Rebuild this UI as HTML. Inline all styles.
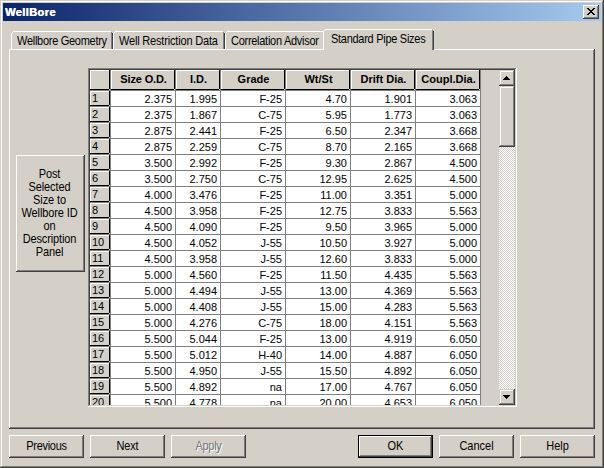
<!DOCTYPE html>
<html><head><meta charset="utf-8"><style>
html,body{margin:0;padding:0;}
body{width:604px;height:468px;overflow:hidden;position:relative;background:#d4d0c8;font-family:"Liberation Sans",sans-serif;font-size:11px;color:#000;}
div,span,svg{position:absolute;}
span{white-space:nowrap;}
</style></head><body>
<div style="left:0px;top:0px;width:604px;height:468px;background:#d4d0c8;"></div>
<div style="left:0px;top:0px;width:604px;height:1px;background:#d4d0c8;"></div>
<div style="left:0px;top:0px;width:1px;height:468px;background:#d4d0c8;"></div>
<div style="left:0px;top:467px;width:604px;height:1px;background:#404040;"></div>
<div style="left:603px;top:0px;width:1px;height:468px;background:#404040;"></div>
<div style="left:1px;top:1px;width:602px;height:1px;background:#ffffff;"></div>
<div style="left:1px;top:1px;width:1px;height:466px;background:#ffffff;"></div>
<div style="left:1px;top:466px;width:602px;height:1px;background:#808080;"></div>
<div style="left:602px;top:1px;width:1px;height:466px;background:#808080;"></div>
<div style="left:3px;top:3px;width:598px;height:18px;background:linear-gradient(to right,#0a246a,#a6caf0);"></div>
<span style="left:5px;top:4px;font-weight:bold;color:#fff;font-size:11px;line-height:16px;letter-spacing:0.4px;text-shadow:0.5px 0 0 #fff">WellBore</span>
<div style="left:583px;top:5px;width:16px;height:14px;background:#d4d0c8;"></div>
<div style="left:583px;top:5px;width:16px;height:1px;background:#ffffff;"></div>
<div style="left:583px;top:5px;width:1px;height:14px;background:#ffffff;"></div>
<div style="left:583px;top:18px;width:16px;height:1px;background:#404040;"></div>
<div style="left:598px;top:5px;width:1px;height:14px;background:#404040;"></div>
<div style="left:584px;top:6px;width:14px;height:1px;background:#d4d0c8;"></div>
<div style="left:584px;top:6px;width:1px;height:12px;background:#d4d0c8;"></div>
<div style="left:584px;top:17px;width:14px;height:1px;background:#808080;"></div>
<div style="left:597px;top:6px;width:1px;height:12px;background:#808080;"></div>
<div style="left:587px;top:8px;width:1px;height:1px;background:#000;"></div>
<div style="left:588px;top:8px;width:1px;height:1px;background:#000;"></div>
<div style="left:593px;top:8px;width:1px;height:1px;background:#000;"></div>
<div style="left:594px;top:8px;width:1px;height:1px;background:#000;"></div>
<div style="left:588px;top:9px;width:1px;height:1px;background:#000;"></div>
<div style="left:589px;top:9px;width:1px;height:1px;background:#000;"></div>
<div style="left:592px;top:9px;width:1px;height:1px;background:#000;"></div>
<div style="left:593px;top:9px;width:1px;height:1px;background:#000;"></div>
<div style="left:589px;top:10px;width:1px;height:1px;background:#000;"></div>
<div style="left:590px;top:10px;width:1px;height:1px;background:#000;"></div>
<div style="left:591px;top:10px;width:1px;height:1px;background:#000;"></div>
<div style="left:592px;top:10px;width:1px;height:1px;background:#000;"></div>
<div style="left:590px;top:11px;width:1px;height:1px;background:#000;"></div>
<div style="left:591px;top:11px;width:1px;height:1px;background:#000;"></div>
<div style="left:589px;top:12px;width:1px;height:1px;background:#000;"></div>
<div style="left:590px;top:12px;width:1px;height:1px;background:#000;"></div>
<div style="left:591px;top:12px;width:1px;height:1px;background:#000;"></div>
<div style="left:592px;top:12px;width:1px;height:1px;background:#000;"></div>
<div style="left:588px;top:13px;width:1px;height:1px;background:#000;"></div>
<div style="left:589px;top:13px;width:1px;height:1px;background:#000;"></div>
<div style="left:592px;top:13px;width:1px;height:1px;background:#000;"></div>
<div style="left:593px;top:13px;width:1px;height:1px;background:#000;"></div>
<div style="left:587px;top:14px;width:1px;height:1px;background:#000;"></div>
<div style="left:588px;top:14px;width:1px;height:1px;background:#000;"></div>
<div style="left:593px;top:14px;width:1px;height:1px;background:#000;"></div>
<div style="left:594px;top:14px;width:1px;height:1px;background:#000;"></div>
<div style="left:9px;top:49px;width:586px;height:1px;background:#ffffff;"></div>
<div style="left:9px;top:49px;width:1px;height:380px;background:#ffffff;"></div>
<div style="left:10px;top:427px;width:584px;height:1px;background:#808080;"></div>
<div style="left:593px;top:50px;width:1px;height:378px;background:#808080;"></div>
<div style="left:9px;top:428px;width:586px;height:1px;background:#404040;"></div>
<div style="left:594px;top:49px;width:1px;height:380px;background:#404040;"></div>
<div style="left:13px;top:31px;width:98px;height:1px;background:#ffffff;"></div>
<div style="left:12px;top:32px;width:1px;height:1px;background:#ffffff;"></div>
<div style="left:11px;top:33px;width:1px;height:16px;background:#ffffff;"></div>
<div style="left:111px;top:32px;width:1px;height:17px;background:#808080;"></div>
<div style="left:112px;top:33px;width:1px;height:16px;background:#404040;"></div>
<span style="left:17px;top:34px;font-size:11px;line-height:13px;letter-spacing:-0.28px;transform:scaleY(1.125);transform-origin:0 0;">Wellbore Geometry</span>
<div style="left:115px;top:31px;width:108px;height:1px;background:#ffffff;"></div>
<div style="left:114px;top:32px;width:1px;height:1px;background:#ffffff;"></div>
<div style="left:113px;top:33px;width:1px;height:16px;background:#ffffff;"></div>
<div style="left:223px;top:32px;width:1px;height:17px;background:#808080;"></div>
<div style="left:224px;top:33px;width:1px;height:16px;background:#404040;"></div>
<span style="left:119px;top:34px;font-size:11px;line-height:13px;letter-spacing:-0.18px;transform:scaleY(1.125);transform-origin:0 0;">Well Restriction Data</span>
<div style="left:227px;top:31px;width:97px;height:1px;background:#ffffff;"></div>
<div style="left:226px;top:32px;width:1px;height:1px;background:#ffffff;"></div>
<div style="left:225px;top:33px;width:1px;height:16px;background:#ffffff;"></div>
<div style="left:324px;top:32px;width:1px;height:17px;background:#808080;"></div>
<div style="left:325px;top:33px;width:1px;height:16px;background:#404040;"></div>
<span style="left:231px;top:34px;font-size:11px;line-height:13px;letter-spacing:-0.28px;transform:scaleY(1.125);transform-origin:0 0;">Correlation Advisor</span>
<div style="left:323px;top:29px;width:111px;height:22px;background:#d4d0c8;"></div>
<div style="left:325px;top:29px;width:107px;height:1px;background:#ffffff;"></div>
<div style="left:324px;top:30px;width:1px;height:1px;background:#ffffff;"></div>
<div style="left:323px;top:31px;width:1px;height:19px;background:#ffffff;"></div>
<div style="left:432px;top:30px;width:1px;height:20px;background:#808080;"></div>
<div style="left:433px;top:31px;width:1px;height:19px;background:#404040;"></div>
<span style="left:331px;top:32px;font-size:11px;line-height:13px;letter-spacing:-0.28px;transform:scaleY(1.125);transform-origin:0 0;">Standard Pipe Sizes</span>
<div style="left:16px;top:155px;width:69px;height:117px;background:#d4d0c8;"></div>
<div style="left:16px;top:155px;width:69px;height:1px;background:#ffffff;"></div>
<div style="left:16px;top:155px;width:1px;height:117px;background:#ffffff;"></div>
<div style="left:16px;top:271px;width:69px;height:1px;background:#404040;"></div>
<div style="left:84px;top:155px;width:1px;height:117px;background:#404040;"></div>
<div style="left:17px;top:156px;width:67px;height:1px;background:#d4d0c8;"></div>
<div style="left:17px;top:156px;width:1px;height:115px;background:#d4d0c8;"></div>
<div style="left:17px;top:270px;width:67px;height:1px;background:#808080;"></div>
<div style="left:83px;top:156px;width:1px;height:115px;background:#808080;"></div>
<span style="left:15px;top:167px;width:69px;text-align:center;font-size:11px;line-height:13px;letter-spacing:-0.12px;transform:scaleY(1.125);transform-origin:0 0">Post</span>
<span style="left:15px;top:180px;width:69px;text-align:center;font-size:11px;line-height:13px;letter-spacing:-0.12px;transform:scaleY(1.125);transform-origin:0 0">Selected</span>
<span style="left:15px;top:193px;width:69px;text-align:center;font-size:11px;line-height:13px;letter-spacing:-0.12px;transform:scaleY(1.125);transform-origin:0 0">Size to</span>
<span style="left:15px;top:206px;width:69px;text-align:center;font-size:11px;line-height:13px;letter-spacing:-0.12px;transform:scaleY(1.125);transform-origin:0 0">Wellbore ID</span>
<span style="left:15px;top:219px;width:69px;text-align:center;font-size:11px;line-height:13px;letter-spacing:-0.12px;transform:scaleY(1.125);transform-origin:0 0">on</span>
<span style="left:15px;top:232px;width:69px;text-align:center;font-size:11px;line-height:13px;letter-spacing:-0.12px;transform:scaleY(1.125);transform-origin:0 0">Description</span>
<span style="left:15px;top:245px;width:69px;text-align:center;font-size:11px;line-height:13px;letter-spacing:-0.12px;transform:scaleY(1.125);transform-origin:0 0">Panel</span>
<div style="left:88px;top:68px;width:429px;height:1px;background:#808080;"></div>
<div style="left:88px;top:68px;width:1px;height:339px;background:#808080;"></div>
<div style="left:88px;top:406px;width:429px;height:1px;background:#ffffff;"></div>
<div style="left:516px;top:68px;width:1px;height:339px;background:#ffffff;"></div>
<div style="left:89px;top:69px;width:427px;height:1px;background:#404040;"></div>
<div style="left:89px;top:69px;width:1px;height:337px;background:#404040;"></div>
<div style="left:89px;top:405px;width:427px;height:1px;background:#d4d0c8;"></div>
<div style="left:515px;top:69px;width:1px;height:337px;background:#d4d0c8;"></div>
<div style="left:90px;top:70px;width:425px;height:335px;background:#d4d0c8;"></div>
<div style="left:90px;top:70px;width:409px;height:335px;overflow:hidden">
<div style="left:21px;top:21px;width:370px;height:330px;background:#ffffff;"></div>
<div style="left:0px;top:0px;width:19px;height:19px;background:#d4d0c8;"></div>
<div style="left:0px;top:0px;width:19px;height:1px;background:#ffffff;"></div>
<div style="left:0px;top:0px;width:1px;height:19px;background:#ffffff;"></div>
<div style="left:0px;top:19px;width:19px;height:1px;background:#000;"></div>
<div style="left:19px;top:0px;width:1px;height:19px;background:#000;"></div>
<div style="left:0px;top:21px;width:19px;height:14px;background:#d4d0c8;"></div>
<div style="left:0px;top:21px;width:19px;height:1px;background:#ffffff;"></div>
<div style="left:0px;top:21px;width:1px;height:14px;background:#ffffff;"></div>
<div style="left:0px;top:35px;width:19px;height:1px;background:#000;"></div>
<div style="left:19px;top:21px;width:1px;height:14px;background:#000;"></div>
<div style="left:0px;top:37px;width:19px;height:14px;background:#d4d0c8;"></div>
<div style="left:0px;top:37px;width:19px;height:1px;background:#ffffff;"></div>
<div style="left:0px;top:37px;width:1px;height:14px;background:#ffffff;"></div>
<div style="left:0px;top:51px;width:19px;height:1px;background:#000;"></div>
<div style="left:19px;top:37px;width:1px;height:14px;background:#000;"></div>
<div style="left:0px;top:53px;width:19px;height:14px;background:#d4d0c8;"></div>
<div style="left:0px;top:53px;width:19px;height:1px;background:#ffffff;"></div>
<div style="left:0px;top:53px;width:1px;height:14px;background:#ffffff;"></div>
<div style="left:0px;top:67px;width:19px;height:1px;background:#000;"></div>
<div style="left:19px;top:53px;width:1px;height:14px;background:#000;"></div>
<div style="left:0px;top:69px;width:19px;height:14px;background:#d4d0c8;"></div>
<div style="left:0px;top:69px;width:19px;height:1px;background:#ffffff;"></div>
<div style="left:0px;top:69px;width:1px;height:14px;background:#ffffff;"></div>
<div style="left:0px;top:83px;width:19px;height:1px;background:#000;"></div>
<div style="left:19px;top:69px;width:1px;height:14px;background:#000;"></div>
<div style="left:0px;top:85px;width:19px;height:14px;background:#d4d0c8;"></div>
<div style="left:0px;top:85px;width:19px;height:1px;background:#ffffff;"></div>
<div style="left:0px;top:85px;width:1px;height:14px;background:#ffffff;"></div>
<div style="left:0px;top:99px;width:19px;height:1px;background:#000;"></div>
<div style="left:19px;top:85px;width:1px;height:14px;background:#000;"></div>
<div style="left:0px;top:101px;width:19px;height:14px;background:#d4d0c8;"></div>
<div style="left:0px;top:101px;width:19px;height:1px;background:#ffffff;"></div>
<div style="left:0px;top:101px;width:1px;height:14px;background:#ffffff;"></div>
<div style="left:0px;top:115px;width:19px;height:1px;background:#000;"></div>
<div style="left:19px;top:101px;width:1px;height:14px;background:#000;"></div>
<div style="left:0px;top:117px;width:19px;height:14px;background:#d4d0c8;"></div>
<div style="left:0px;top:117px;width:19px;height:1px;background:#ffffff;"></div>
<div style="left:0px;top:117px;width:1px;height:14px;background:#ffffff;"></div>
<div style="left:0px;top:131px;width:19px;height:1px;background:#000;"></div>
<div style="left:19px;top:117px;width:1px;height:14px;background:#000;"></div>
<div style="left:0px;top:133px;width:19px;height:14px;background:#d4d0c8;"></div>
<div style="left:0px;top:133px;width:19px;height:1px;background:#ffffff;"></div>
<div style="left:0px;top:133px;width:1px;height:14px;background:#ffffff;"></div>
<div style="left:0px;top:147px;width:19px;height:1px;background:#000;"></div>
<div style="left:19px;top:133px;width:1px;height:14px;background:#000;"></div>
<div style="left:0px;top:149px;width:19px;height:14px;background:#d4d0c8;"></div>
<div style="left:0px;top:149px;width:19px;height:1px;background:#ffffff;"></div>
<div style="left:0px;top:149px;width:1px;height:14px;background:#ffffff;"></div>
<div style="left:0px;top:163px;width:19px;height:1px;background:#000;"></div>
<div style="left:19px;top:149px;width:1px;height:14px;background:#000;"></div>
<div style="left:0px;top:165px;width:19px;height:14px;background:#d4d0c8;"></div>
<div style="left:0px;top:165px;width:19px;height:1px;background:#ffffff;"></div>
<div style="left:0px;top:165px;width:1px;height:14px;background:#ffffff;"></div>
<div style="left:0px;top:179px;width:19px;height:1px;background:#000;"></div>
<div style="left:19px;top:165px;width:1px;height:14px;background:#000;"></div>
<div style="left:0px;top:181px;width:19px;height:14px;background:#d4d0c8;"></div>
<div style="left:0px;top:181px;width:19px;height:1px;background:#ffffff;"></div>
<div style="left:0px;top:181px;width:1px;height:14px;background:#ffffff;"></div>
<div style="left:0px;top:195px;width:19px;height:1px;background:#000;"></div>
<div style="left:19px;top:181px;width:1px;height:14px;background:#000;"></div>
<div style="left:0px;top:197px;width:19px;height:14px;background:#d4d0c8;"></div>
<div style="left:0px;top:197px;width:19px;height:1px;background:#ffffff;"></div>
<div style="left:0px;top:197px;width:1px;height:14px;background:#ffffff;"></div>
<div style="left:0px;top:211px;width:19px;height:1px;background:#000;"></div>
<div style="left:19px;top:197px;width:1px;height:14px;background:#000;"></div>
<div style="left:0px;top:213px;width:19px;height:14px;background:#d4d0c8;"></div>
<div style="left:0px;top:213px;width:19px;height:1px;background:#ffffff;"></div>
<div style="left:0px;top:213px;width:1px;height:14px;background:#ffffff;"></div>
<div style="left:0px;top:227px;width:19px;height:1px;background:#000;"></div>
<div style="left:19px;top:213px;width:1px;height:14px;background:#000;"></div>
<div style="left:0px;top:229px;width:19px;height:14px;background:#d4d0c8;"></div>
<div style="left:0px;top:229px;width:19px;height:1px;background:#ffffff;"></div>
<div style="left:0px;top:229px;width:1px;height:14px;background:#ffffff;"></div>
<div style="left:0px;top:243px;width:19px;height:1px;background:#000;"></div>
<div style="left:19px;top:229px;width:1px;height:14px;background:#000;"></div>
<div style="left:0px;top:245px;width:19px;height:14px;background:#d4d0c8;"></div>
<div style="left:0px;top:245px;width:19px;height:1px;background:#ffffff;"></div>
<div style="left:0px;top:245px;width:1px;height:14px;background:#ffffff;"></div>
<div style="left:0px;top:259px;width:19px;height:1px;background:#000;"></div>
<div style="left:19px;top:245px;width:1px;height:14px;background:#000;"></div>
<div style="left:0px;top:261px;width:19px;height:14px;background:#d4d0c8;"></div>
<div style="left:0px;top:261px;width:19px;height:1px;background:#ffffff;"></div>
<div style="left:0px;top:261px;width:1px;height:14px;background:#ffffff;"></div>
<div style="left:0px;top:275px;width:19px;height:1px;background:#000;"></div>
<div style="left:19px;top:261px;width:1px;height:14px;background:#000;"></div>
<div style="left:0px;top:277px;width:19px;height:14px;background:#d4d0c8;"></div>
<div style="left:0px;top:277px;width:19px;height:1px;background:#ffffff;"></div>
<div style="left:0px;top:277px;width:1px;height:14px;background:#ffffff;"></div>
<div style="left:0px;top:291px;width:19px;height:1px;background:#000;"></div>
<div style="left:19px;top:277px;width:1px;height:14px;background:#000;"></div>
<div style="left:0px;top:293px;width:19px;height:14px;background:#d4d0c8;"></div>
<div style="left:0px;top:293px;width:19px;height:1px;background:#ffffff;"></div>
<div style="left:0px;top:293px;width:1px;height:14px;background:#ffffff;"></div>
<div style="left:0px;top:307px;width:19px;height:1px;background:#000;"></div>
<div style="left:19px;top:293px;width:1px;height:14px;background:#000;"></div>
<div style="left:0px;top:309px;width:19px;height:14px;background:#d4d0c8;"></div>
<div style="left:0px;top:309px;width:19px;height:1px;background:#ffffff;"></div>
<div style="left:0px;top:309px;width:1px;height:14px;background:#ffffff;"></div>
<div style="left:0px;top:323px;width:19px;height:1px;background:#000;"></div>
<div style="left:19px;top:309px;width:1px;height:14px;background:#000;"></div>
<div style="left:0px;top:325px;width:19px;height:14px;background:#d4d0c8;"></div>
<div style="left:0px;top:325px;width:19px;height:1px;background:#ffffff;"></div>
<div style="left:0px;top:325px;width:1px;height:14px;background:#ffffff;"></div>
<div style="left:0px;top:339px;width:19px;height:1px;background:#000;"></div>
<div style="left:19px;top:325px;width:1px;height:14px;background:#000;"></div>
<div style="left:21px;top:0px;width:63px;height:19px;background:#d4d0c8;"></div>
<div style="left:21px;top:0px;width:63px;height:1px;background:#ffffff;"></div>
<div style="left:21px;top:0px;width:1px;height:19px;background:#ffffff;"></div>
<div style="left:21px;top:19px;width:63px;height:1px;background:#000;"></div>
<div style="left:84px;top:0px;width:1px;height:19px;background:#000;"></div>
<div style="left:86px;top:0px;width:43px;height:19px;background:#d4d0c8;"></div>
<div style="left:86px;top:0px;width:43px;height:1px;background:#ffffff;"></div>
<div style="left:86px;top:0px;width:1px;height:19px;background:#ffffff;"></div>
<div style="left:86px;top:19px;width:43px;height:1px;background:#000;"></div>
<div style="left:129px;top:0px;width:1px;height:19px;background:#000;"></div>
<div style="left:131px;top:0px;width:63px;height:19px;background:#d4d0c8;"></div>
<div style="left:131px;top:0px;width:63px;height:1px;background:#ffffff;"></div>
<div style="left:131px;top:0px;width:1px;height:19px;background:#ffffff;"></div>
<div style="left:131px;top:19px;width:63px;height:1px;background:#000;"></div>
<div style="left:194px;top:0px;width:1px;height:19px;background:#000;"></div>
<div style="left:196px;top:0px;width:63px;height:19px;background:#d4d0c8;"></div>
<div style="left:196px;top:0px;width:63px;height:1px;background:#ffffff;"></div>
<div style="left:196px;top:0px;width:1px;height:19px;background:#ffffff;"></div>
<div style="left:196px;top:19px;width:63px;height:1px;background:#000;"></div>
<div style="left:259px;top:0px;width:1px;height:19px;background:#000;"></div>
<div style="left:261px;top:0px;width:63px;height:19px;background:#d4d0c8;"></div>
<div style="left:261px;top:0px;width:63px;height:1px;background:#ffffff;"></div>
<div style="left:261px;top:0px;width:1px;height:19px;background:#ffffff;"></div>
<div style="left:261px;top:19px;width:63px;height:1px;background:#000;"></div>
<div style="left:324px;top:0px;width:1px;height:19px;background:#000;"></div>
<div style="left:326px;top:0px;width:63px;height:19px;background:#d4d0c8;"></div>
<div style="left:326px;top:0px;width:63px;height:1px;background:#ffffff;"></div>
<div style="left:326px;top:0px;width:1px;height:19px;background:#ffffff;"></div>
<div style="left:326px;top:19px;width:63px;height:1px;background:#000;"></div>
<div style="left:389px;top:0px;width:1px;height:19px;background:#000;"></div>
<div style="left:20px;top:0px;width:1px;height:335px;background:#808080;"></div>
<div style="left:85px;top:0px;width:1px;height:335px;background:#808080;"></div>
<div style="left:130px;top:0px;width:1px;height:335px;background:#808080;"></div>
<div style="left:195px;top:0px;width:1px;height:335px;background:#808080;"></div>
<div style="left:260px;top:0px;width:1px;height:335px;background:#808080;"></div>
<div style="left:325px;top:0px;width:1px;height:335px;background:#808080;"></div>
<div style="left:390px;top:0px;width:1px;height:335px;background:#808080;"></div>
<div style="left:0px;top:20px;width:391px;height:1px;background:#808080;"></div>
<div style="left:0px;top:36px;width:391px;height:1px;background:#808080;"></div>
<div style="left:0px;top:52px;width:391px;height:1px;background:#808080;"></div>
<div style="left:0px;top:68px;width:391px;height:1px;background:#808080;"></div>
<div style="left:0px;top:84px;width:391px;height:1px;background:#808080;"></div>
<div style="left:0px;top:100px;width:391px;height:1px;background:#808080;"></div>
<div style="left:0px;top:116px;width:391px;height:1px;background:#808080;"></div>
<div style="left:0px;top:132px;width:391px;height:1px;background:#808080;"></div>
<div style="left:0px;top:148px;width:391px;height:1px;background:#808080;"></div>
<div style="left:0px;top:164px;width:391px;height:1px;background:#808080;"></div>
<div style="left:0px;top:180px;width:391px;height:1px;background:#808080;"></div>
<div style="left:0px;top:196px;width:391px;height:1px;background:#808080;"></div>
<div style="left:0px;top:212px;width:391px;height:1px;background:#808080;"></div>
<div style="left:0px;top:228px;width:391px;height:1px;background:#808080;"></div>
<div style="left:0px;top:244px;width:391px;height:1px;background:#808080;"></div>
<div style="left:0px;top:260px;width:391px;height:1px;background:#808080;"></div>
<div style="left:0px;top:276px;width:391px;height:1px;background:#808080;"></div>
<div style="left:0px;top:292px;width:391px;height:1px;background:#808080;"></div>
<div style="left:0px;top:308px;width:391px;height:1px;background:#808080;"></div>
<div style="left:0px;top:324px;width:391px;height:1px;background:#808080;"></div>
<div style="left:0px;top:340px;width:391px;height:1px;background:#808080;"></div>
<span style="left:21px;top:3px;width:65px;text-align:center;font-weight:bold;font-size:11px;line-height:12px;letter-spacing:-0.15px">Size O.D.</span>
<span style="left:86px;top:3px;width:45px;text-align:center;font-weight:bold;font-size:11px;line-height:12px;letter-spacing:0px">I.D.</span>
<span style="left:131px;top:3px;width:65px;text-align:center;font-weight:bold;font-size:11px;line-height:12px;letter-spacing:0px">Grade</span>
<span style="left:196px;top:3px;width:65px;text-align:center;font-weight:bold;font-size:11px;line-height:12px;letter-spacing:0px">Wt/St</span>
<span style="left:261px;top:3px;width:65px;text-align:center;font-weight:bold;font-size:11px;line-height:12px;letter-spacing:0px">Drift Dia.</span>
<span style="left:326px;top:3px;width:65px;text-align:center;font-weight:bold;font-size:11px;line-height:12px;letter-spacing:0px">Coupl.Dia.</span>
<span style="left:2px;top:22px;font-size:11px;line-height:13px">1</span>
<span style="left:21px;top:23px;width:61px;text-align:right;font-size:11px;line-height:13px">2.375</span>
<span style="left:86px;top:23px;width:41px;text-align:right;font-size:11px;line-height:13px">1.995</span>
<span style="left:131px;top:23px;width:61px;text-align:right;font-size:11px;line-height:13px">F-25</span>
<span style="left:196px;top:23px;width:61px;text-align:right;font-size:11px;line-height:13px">4.70</span>
<span style="left:261px;top:23px;width:61px;text-align:right;font-size:11px;line-height:13px">1.901</span>
<span style="left:326px;top:23px;width:61px;text-align:right;font-size:11px;line-height:13px">3.063</span>
<span style="left:2px;top:38px;font-size:11px;line-height:13px">2</span>
<span style="left:21px;top:39px;width:61px;text-align:right;font-size:11px;line-height:13px">2.375</span>
<span style="left:86px;top:39px;width:41px;text-align:right;font-size:11px;line-height:13px">1.867</span>
<span style="left:131px;top:39px;width:61px;text-align:right;font-size:11px;line-height:13px">C-75</span>
<span style="left:196px;top:39px;width:61px;text-align:right;font-size:11px;line-height:13px">5.95</span>
<span style="left:261px;top:39px;width:61px;text-align:right;font-size:11px;line-height:13px">1.773</span>
<span style="left:326px;top:39px;width:61px;text-align:right;font-size:11px;line-height:13px">3.063</span>
<span style="left:2px;top:54px;font-size:11px;line-height:13px">3</span>
<span style="left:21px;top:55px;width:61px;text-align:right;font-size:11px;line-height:13px">2.875</span>
<span style="left:86px;top:55px;width:41px;text-align:right;font-size:11px;line-height:13px">2.441</span>
<span style="left:131px;top:55px;width:61px;text-align:right;font-size:11px;line-height:13px">F-25</span>
<span style="left:196px;top:55px;width:61px;text-align:right;font-size:11px;line-height:13px">6.50</span>
<span style="left:261px;top:55px;width:61px;text-align:right;font-size:11px;line-height:13px">2.347</span>
<span style="left:326px;top:55px;width:61px;text-align:right;font-size:11px;line-height:13px">3.668</span>
<span style="left:2px;top:70px;font-size:11px;line-height:13px">4</span>
<span style="left:21px;top:71px;width:61px;text-align:right;font-size:11px;line-height:13px">2.875</span>
<span style="left:86px;top:71px;width:41px;text-align:right;font-size:11px;line-height:13px">2.259</span>
<span style="left:131px;top:71px;width:61px;text-align:right;font-size:11px;line-height:13px">C-75</span>
<span style="left:196px;top:71px;width:61px;text-align:right;font-size:11px;line-height:13px">8.70</span>
<span style="left:261px;top:71px;width:61px;text-align:right;font-size:11px;line-height:13px">2.165</span>
<span style="left:326px;top:71px;width:61px;text-align:right;font-size:11px;line-height:13px">3.668</span>
<span style="left:2px;top:86px;font-size:11px;line-height:13px">5</span>
<span style="left:21px;top:87px;width:61px;text-align:right;font-size:11px;line-height:13px">3.500</span>
<span style="left:86px;top:87px;width:41px;text-align:right;font-size:11px;line-height:13px">2.992</span>
<span style="left:131px;top:87px;width:61px;text-align:right;font-size:11px;line-height:13px">F-25</span>
<span style="left:196px;top:87px;width:61px;text-align:right;font-size:11px;line-height:13px">9.30</span>
<span style="left:261px;top:87px;width:61px;text-align:right;font-size:11px;line-height:13px">2.867</span>
<span style="left:326px;top:87px;width:61px;text-align:right;font-size:11px;line-height:13px">4.500</span>
<span style="left:2px;top:102px;font-size:11px;line-height:13px">6</span>
<span style="left:21px;top:103px;width:61px;text-align:right;font-size:11px;line-height:13px">3.500</span>
<span style="left:86px;top:103px;width:41px;text-align:right;font-size:11px;line-height:13px">2.750</span>
<span style="left:131px;top:103px;width:61px;text-align:right;font-size:11px;line-height:13px">C-75</span>
<span style="left:196px;top:103px;width:61px;text-align:right;font-size:11px;line-height:13px">12.95</span>
<span style="left:261px;top:103px;width:61px;text-align:right;font-size:11px;line-height:13px">2.625</span>
<span style="left:326px;top:103px;width:61px;text-align:right;font-size:11px;line-height:13px">4.500</span>
<span style="left:2px;top:118px;font-size:11px;line-height:13px">7</span>
<span style="left:21px;top:119px;width:61px;text-align:right;font-size:11px;line-height:13px">4.000</span>
<span style="left:86px;top:119px;width:41px;text-align:right;font-size:11px;line-height:13px">3.476</span>
<span style="left:131px;top:119px;width:61px;text-align:right;font-size:11px;line-height:13px">F-25</span>
<span style="left:196px;top:119px;width:61px;text-align:right;font-size:11px;line-height:13px">11.00</span>
<span style="left:261px;top:119px;width:61px;text-align:right;font-size:11px;line-height:13px">3.351</span>
<span style="left:326px;top:119px;width:61px;text-align:right;font-size:11px;line-height:13px">5.000</span>
<span style="left:2px;top:134px;font-size:11px;line-height:13px">8</span>
<span style="left:21px;top:135px;width:61px;text-align:right;font-size:11px;line-height:13px">4.500</span>
<span style="left:86px;top:135px;width:41px;text-align:right;font-size:11px;line-height:13px">3.958</span>
<span style="left:131px;top:135px;width:61px;text-align:right;font-size:11px;line-height:13px">F-25</span>
<span style="left:196px;top:135px;width:61px;text-align:right;font-size:11px;line-height:13px">12.75</span>
<span style="left:261px;top:135px;width:61px;text-align:right;font-size:11px;line-height:13px">3.833</span>
<span style="left:326px;top:135px;width:61px;text-align:right;font-size:11px;line-height:13px">5.563</span>
<span style="left:2px;top:150px;font-size:11px;line-height:13px">9</span>
<span style="left:21px;top:151px;width:61px;text-align:right;font-size:11px;line-height:13px">4.500</span>
<span style="left:86px;top:151px;width:41px;text-align:right;font-size:11px;line-height:13px">4.090</span>
<span style="left:131px;top:151px;width:61px;text-align:right;font-size:11px;line-height:13px">F-25</span>
<span style="left:196px;top:151px;width:61px;text-align:right;font-size:11px;line-height:13px">9.50</span>
<span style="left:261px;top:151px;width:61px;text-align:right;font-size:11px;line-height:13px">3.965</span>
<span style="left:326px;top:151px;width:61px;text-align:right;font-size:11px;line-height:13px">5.000</span>
<span style="left:2px;top:166px;font-size:11px;line-height:13px">10</span>
<span style="left:21px;top:167px;width:61px;text-align:right;font-size:11px;line-height:13px">4.500</span>
<span style="left:86px;top:167px;width:41px;text-align:right;font-size:11px;line-height:13px">4.052</span>
<span style="left:131px;top:167px;width:61px;text-align:right;font-size:11px;line-height:13px">J-55</span>
<span style="left:196px;top:167px;width:61px;text-align:right;font-size:11px;line-height:13px">10.50</span>
<span style="left:261px;top:167px;width:61px;text-align:right;font-size:11px;line-height:13px">3.927</span>
<span style="left:326px;top:167px;width:61px;text-align:right;font-size:11px;line-height:13px">5.000</span>
<span style="left:2px;top:182px;font-size:11px;line-height:13px">11</span>
<span style="left:21px;top:183px;width:61px;text-align:right;font-size:11px;line-height:13px">4.500</span>
<span style="left:86px;top:183px;width:41px;text-align:right;font-size:11px;line-height:13px">3.958</span>
<span style="left:131px;top:183px;width:61px;text-align:right;font-size:11px;line-height:13px">J-55</span>
<span style="left:196px;top:183px;width:61px;text-align:right;font-size:11px;line-height:13px">12.60</span>
<span style="left:261px;top:183px;width:61px;text-align:right;font-size:11px;line-height:13px">3.833</span>
<span style="left:326px;top:183px;width:61px;text-align:right;font-size:11px;line-height:13px">5.000</span>
<span style="left:2px;top:198px;font-size:11px;line-height:13px">12</span>
<span style="left:21px;top:199px;width:61px;text-align:right;font-size:11px;line-height:13px">5.000</span>
<span style="left:86px;top:199px;width:41px;text-align:right;font-size:11px;line-height:13px">4.560</span>
<span style="left:131px;top:199px;width:61px;text-align:right;font-size:11px;line-height:13px">F-25</span>
<span style="left:196px;top:199px;width:61px;text-align:right;font-size:11px;line-height:13px">11.50</span>
<span style="left:261px;top:199px;width:61px;text-align:right;font-size:11px;line-height:13px">4.435</span>
<span style="left:326px;top:199px;width:61px;text-align:right;font-size:11px;line-height:13px">5.563</span>
<span style="left:2px;top:214px;font-size:11px;line-height:13px">13</span>
<span style="left:21px;top:215px;width:61px;text-align:right;font-size:11px;line-height:13px">5.000</span>
<span style="left:86px;top:215px;width:41px;text-align:right;font-size:11px;line-height:13px">4.494</span>
<span style="left:131px;top:215px;width:61px;text-align:right;font-size:11px;line-height:13px">J-55</span>
<span style="left:196px;top:215px;width:61px;text-align:right;font-size:11px;line-height:13px">13.00</span>
<span style="left:261px;top:215px;width:61px;text-align:right;font-size:11px;line-height:13px">4.369</span>
<span style="left:326px;top:215px;width:61px;text-align:right;font-size:11px;line-height:13px">5.563</span>
<span style="left:2px;top:230px;font-size:11px;line-height:13px">14</span>
<span style="left:21px;top:231px;width:61px;text-align:right;font-size:11px;line-height:13px">5.000</span>
<span style="left:86px;top:231px;width:41px;text-align:right;font-size:11px;line-height:13px">4.408</span>
<span style="left:131px;top:231px;width:61px;text-align:right;font-size:11px;line-height:13px">J-55</span>
<span style="left:196px;top:231px;width:61px;text-align:right;font-size:11px;line-height:13px">15.00</span>
<span style="left:261px;top:231px;width:61px;text-align:right;font-size:11px;line-height:13px">4.283</span>
<span style="left:326px;top:231px;width:61px;text-align:right;font-size:11px;line-height:13px">5.563</span>
<span style="left:2px;top:246px;font-size:11px;line-height:13px">15</span>
<span style="left:21px;top:247px;width:61px;text-align:right;font-size:11px;line-height:13px">5.000</span>
<span style="left:86px;top:247px;width:41px;text-align:right;font-size:11px;line-height:13px">4.276</span>
<span style="left:131px;top:247px;width:61px;text-align:right;font-size:11px;line-height:13px">C-75</span>
<span style="left:196px;top:247px;width:61px;text-align:right;font-size:11px;line-height:13px">18.00</span>
<span style="left:261px;top:247px;width:61px;text-align:right;font-size:11px;line-height:13px">4.151</span>
<span style="left:326px;top:247px;width:61px;text-align:right;font-size:11px;line-height:13px">5.563</span>
<span style="left:2px;top:262px;font-size:11px;line-height:13px">16</span>
<span style="left:21px;top:263px;width:61px;text-align:right;font-size:11px;line-height:13px">5.500</span>
<span style="left:86px;top:263px;width:41px;text-align:right;font-size:11px;line-height:13px">5.044</span>
<span style="left:131px;top:263px;width:61px;text-align:right;font-size:11px;line-height:13px">F-25</span>
<span style="left:196px;top:263px;width:61px;text-align:right;font-size:11px;line-height:13px">13.00</span>
<span style="left:261px;top:263px;width:61px;text-align:right;font-size:11px;line-height:13px">4.919</span>
<span style="left:326px;top:263px;width:61px;text-align:right;font-size:11px;line-height:13px">6.050</span>
<span style="left:2px;top:278px;font-size:11px;line-height:13px">17</span>
<span style="left:21px;top:279px;width:61px;text-align:right;font-size:11px;line-height:13px">5.500</span>
<span style="left:86px;top:279px;width:41px;text-align:right;font-size:11px;line-height:13px">5.012</span>
<span style="left:131px;top:279px;width:61px;text-align:right;font-size:11px;line-height:13px">H-40</span>
<span style="left:196px;top:279px;width:61px;text-align:right;font-size:11px;line-height:13px">14.00</span>
<span style="left:261px;top:279px;width:61px;text-align:right;font-size:11px;line-height:13px">4.887</span>
<span style="left:326px;top:279px;width:61px;text-align:right;font-size:11px;line-height:13px">6.050</span>
<span style="left:2px;top:294px;font-size:11px;line-height:13px">18</span>
<span style="left:21px;top:295px;width:61px;text-align:right;font-size:11px;line-height:13px">5.500</span>
<span style="left:86px;top:295px;width:41px;text-align:right;font-size:11px;line-height:13px">4.950</span>
<span style="left:131px;top:295px;width:61px;text-align:right;font-size:11px;line-height:13px">J-55</span>
<span style="left:196px;top:295px;width:61px;text-align:right;font-size:11px;line-height:13px">15.50</span>
<span style="left:261px;top:295px;width:61px;text-align:right;font-size:11px;line-height:13px">4.892</span>
<span style="left:326px;top:295px;width:61px;text-align:right;font-size:11px;line-height:13px">6.050</span>
<span style="left:2px;top:310px;font-size:11px;line-height:13px">19</span>
<span style="left:21px;top:311px;width:61px;text-align:right;font-size:11px;line-height:13px">5.500</span>
<span style="left:86px;top:311px;width:41px;text-align:right;font-size:11px;line-height:13px">4.892</span>
<span style="left:131px;top:311px;width:61px;text-align:right;font-size:11px;line-height:13px">na</span>
<span style="left:196px;top:311px;width:61px;text-align:right;font-size:11px;line-height:13px">17.00</span>
<span style="left:261px;top:311px;width:61px;text-align:right;font-size:11px;line-height:13px">4.767</span>
<span style="left:326px;top:311px;width:61px;text-align:right;font-size:11px;line-height:13px">6.050</span>
<span style="left:2px;top:326px;font-size:11px;line-height:13px">20</span>
<span style="left:21px;top:327px;width:61px;text-align:right;font-size:11px;line-height:13px">5.500</span>
<span style="left:86px;top:327px;width:41px;text-align:right;font-size:11px;line-height:13px">4.778</span>
<span style="left:131px;top:327px;width:61px;text-align:right;font-size:11px;line-height:13px">na</span>
<span style="left:196px;top:327px;width:61px;text-align:right;font-size:11px;line-height:13px">20.00</span>
<span style="left:261px;top:327px;width:61px;text-align:right;font-size:11px;line-height:13px">4.653</span>
<span style="left:326px;top:327px;width:61px;text-align:right;font-size:11px;line-height:13px">6.050</span>
</div>
<div style="left:499px;top:86px;width:16px;height:319px;background:repeating-conic-gradient(#fff 0 25%,#d4d0c8 0 50%) 1px 0/2px 2px;"></div>
<div style="left:499px;top:70px;width:16px;height:16px;background:#d4d0c8;"></div>
<div style="left:499px;top:70px;width:16px;height:1px;background:#d4d0c8;"></div>
<div style="left:499px;top:70px;width:1px;height:16px;background:#d4d0c8;"></div>
<div style="left:499px;top:85px;width:16px;height:1px;background:#404040;"></div>
<div style="left:514px;top:70px;width:1px;height:16px;background:#404040;"></div>
<div style="left:500px;top:71px;width:14px;height:1px;background:#ffffff;"></div>
<div style="left:500px;top:71px;width:1px;height:14px;background:#ffffff;"></div>
<div style="left:500px;top:84px;width:14px;height:1px;background:#808080;"></div>
<div style="left:513px;top:71px;width:1px;height:14px;background:#808080;"></div>
<div style="left:506px;top:76px;width:1px;height:1px;background:#000;"></div>
<div style="left:505px;top:77px;width:3px;height:1px;background:#000;"></div>
<div style="left:504px;top:78px;width:5px;height:1px;background:#000;"></div>
<div style="left:503px;top:79px;width:7px;height:1px;background:#000;"></div>
<div style="left:499px;top:389px;width:16px;height:16px;background:#d4d0c8;"></div>
<div style="left:499px;top:389px;width:16px;height:1px;background:#d4d0c8;"></div>
<div style="left:499px;top:389px;width:1px;height:16px;background:#d4d0c8;"></div>
<div style="left:499px;top:404px;width:16px;height:1px;background:#404040;"></div>
<div style="left:514px;top:389px;width:1px;height:16px;background:#404040;"></div>
<div style="left:500px;top:390px;width:14px;height:1px;background:#ffffff;"></div>
<div style="left:500px;top:390px;width:1px;height:14px;background:#ffffff;"></div>
<div style="left:500px;top:403px;width:14px;height:1px;background:#808080;"></div>
<div style="left:513px;top:390px;width:1px;height:14px;background:#808080;"></div>
<div style="left:503px;top:395px;width:7px;height:1px;background:#000;"></div>
<div style="left:504px;top:396px;width:5px;height:1px;background:#000;"></div>
<div style="left:505px;top:397px;width:3px;height:1px;background:#000;"></div>
<div style="left:506px;top:398px;width:1px;height:1px;background:#000;"></div>
<div style="left:499px;top:86px;width:16px;height:61px;background:#d4d0c8;"></div>
<div style="left:499px;top:86px;width:16px;height:1px;background:#d4d0c8;"></div>
<div style="left:499px;top:86px;width:1px;height:61px;background:#d4d0c8;"></div>
<div style="left:499px;top:146px;width:16px;height:1px;background:#404040;"></div>
<div style="left:514px;top:86px;width:1px;height:61px;background:#404040;"></div>
<div style="left:500px;top:87px;width:14px;height:1px;background:#ffffff;"></div>
<div style="left:500px;top:87px;width:1px;height:59px;background:#ffffff;"></div>
<div style="left:500px;top:145px;width:14px;height:1px;background:#808080;"></div>
<div style="left:513px;top:87px;width:1px;height:59px;background:#808080;"></div>
<div style="left:9px;top:435px;width:75px;height:23px;background:#d4d0c8;"></div>
<div style="left:9px;top:435px;width:75px;height:1px;background:#ffffff;"></div>
<div style="left:9px;top:435px;width:1px;height:23px;background:#ffffff;"></div>
<div style="left:9px;top:457px;width:75px;height:1px;background:#404040;"></div>
<div style="left:83px;top:435px;width:1px;height:23px;background:#404040;"></div>
<div style="left:10px;top:436px;width:73px;height:1px;background:#d4d0c8;"></div>
<div style="left:10px;top:436px;width:1px;height:21px;background:#d4d0c8;"></div>
<div style="left:10px;top:456px;width:73px;height:1px;background:#808080;"></div>
<div style="left:82px;top:436px;width:1px;height:21px;background:#808080;"></div>
<span style="left:9px;top:439px;width:75px;text-align:center;font-size:11px;line-height:13px;letter-spacing:-0.3px;transform:scaleY(1.125);transform-origin:0 0;">Previous</span>
<div style="left:90px;top:435px;width:75px;height:23px;background:#d4d0c8;"></div>
<div style="left:90px;top:435px;width:75px;height:1px;background:#ffffff;"></div>
<div style="left:90px;top:435px;width:1px;height:23px;background:#ffffff;"></div>
<div style="left:90px;top:457px;width:75px;height:1px;background:#404040;"></div>
<div style="left:164px;top:435px;width:1px;height:23px;background:#404040;"></div>
<div style="left:91px;top:436px;width:73px;height:1px;background:#d4d0c8;"></div>
<div style="left:91px;top:436px;width:1px;height:21px;background:#d4d0c8;"></div>
<div style="left:91px;top:456px;width:73px;height:1px;background:#808080;"></div>
<div style="left:163px;top:436px;width:1px;height:21px;background:#808080;"></div>
<span style="left:90px;top:439px;width:75px;text-align:center;font-size:11px;line-height:13px;letter-spacing:-0.15px;transform:scaleY(1.125);transform-origin:0 0;">Next</span>
<div style="left:171px;top:435px;width:75px;height:23px;background:#d4d0c8;"></div>
<div style="left:171px;top:435px;width:75px;height:1px;background:#ffffff;"></div>
<div style="left:171px;top:435px;width:1px;height:23px;background:#ffffff;"></div>
<div style="left:171px;top:457px;width:75px;height:1px;background:#404040;"></div>
<div style="left:245px;top:435px;width:1px;height:23px;background:#404040;"></div>
<div style="left:172px;top:436px;width:73px;height:1px;background:#d4d0c8;"></div>
<div style="left:172px;top:436px;width:1px;height:21px;background:#d4d0c8;"></div>
<div style="left:172px;top:456px;width:73px;height:1px;background:#808080;"></div>
<div style="left:244px;top:436px;width:1px;height:21px;background:#808080;"></div>
<span style="left:172px;top:440px;width:75px;text-align:center;font-size:11px;line-height:13px;letter-spacing:-0.35px;transform:scaleY(1.125);transform-origin:0 0;color:#fff">Apply</span>
<span style="left:171px;top:439px;width:75px;text-align:center;font-size:11px;line-height:13px;letter-spacing:-0.35px;transform:scaleY(1.125);transform-origin:0 0;color:#747474">Apply</span>
<div style="left:358px;top:435px;width:75px;height:23px;background:#d4d0c8;"></div>
<div style="left:358px;top:435px;width:75px;height:1px;background:#000;"></div>
<div style="left:358px;top:457px;width:75px;height:1px;background:#000;"></div>
<div style="left:358px;top:435px;width:1px;height:23px;background:#000;"></div>
<div style="left:432px;top:435px;width:1px;height:23px;background:#000;"></div>
<div style="left:359px;top:436px;width:73px;height:1px;background:#ffffff;"></div>
<div style="left:359px;top:436px;width:1px;height:21px;background:#ffffff;"></div>
<div style="left:359px;top:456px;width:73px;height:1px;background:#404040;"></div>
<div style="left:431px;top:436px;width:1px;height:21px;background:#404040;"></div>
<div style="left:360px;top:437px;width:71px;height:1px;background:#d4d0c8;"></div>
<div style="left:360px;top:437px;width:1px;height:19px;background:#d4d0c8;"></div>
<div style="left:360px;top:455px;width:71px;height:1px;background:#808080;"></div>
<div style="left:430px;top:437px;width:1px;height:19px;background:#808080;"></div>
<span style="left:358px;top:439px;width:75px;text-align:center;font-size:11px;line-height:13px;letter-spacing:0px;transform:scaleY(1.125);transform-origin:0 0;">OK</span>
<div style="left:439px;top:435px;width:75px;height:23px;background:#d4d0c8;"></div>
<div style="left:439px;top:435px;width:75px;height:1px;background:#ffffff;"></div>
<div style="left:439px;top:435px;width:1px;height:23px;background:#ffffff;"></div>
<div style="left:439px;top:457px;width:75px;height:1px;background:#404040;"></div>
<div style="left:513px;top:435px;width:1px;height:23px;background:#404040;"></div>
<div style="left:440px;top:436px;width:73px;height:1px;background:#d4d0c8;"></div>
<div style="left:440px;top:436px;width:1px;height:21px;background:#d4d0c8;"></div>
<div style="left:440px;top:456px;width:73px;height:1px;background:#808080;"></div>
<div style="left:512px;top:436px;width:1px;height:21px;background:#808080;"></div>
<span style="left:439px;top:439px;width:75px;text-align:center;font-size:11px;line-height:13px;letter-spacing:0px;transform:scaleY(1.125);transform-origin:0 0;">Cancel</span>
<div style="left:520px;top:435px;width:75px;height:23px;background:#d4d0c8;"></div>
<div style="left:520px;top:435px;width:75px;height:1px;background:#ffffff;"></div>
<div style="left:520px;top:435px;width:1px;height:23px;background:#ffffff;"></div>
<div style="left:520px;top:457px;width:75px;height:1px;background:#404040;"></div>
<div style="left:594px;top:435px;width:1px;height:23px;background:#404040;"></div>
<div style="left:521px;top:436px;width:73px;height:1px;background:#d4d0c8;"></div>
<div style="left:521px;top:436px;width:1px;height:21px;background:#d4d0c8;"></div>
<div style="left:521px;top:456px;width:73px;height:1px;background:#808080;"></div>
<div style="left:593px;top:436px;width:1px;height:21px;background:#808080;"></div>
<span style="left:520px;top:439px;width:75px;text-align:center;font-size:11px;line-height:13px;letter-spacing:0px;transform:scaleY(1.125);transform-origin:0 0;">Help</span>
</body></html>
